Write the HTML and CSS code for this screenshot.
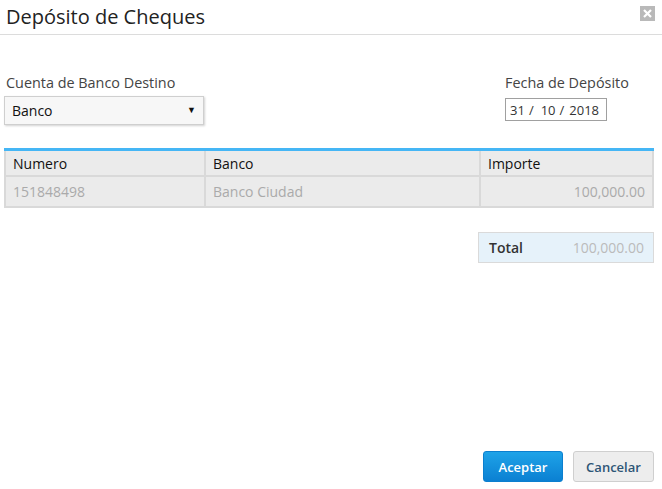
FILE: index.html
```html
<!DOCTYPE html>
<html lang="es">
<head>
<meta charset="utf-8">
<title>Depósito de Cheques</title>
<link rel="stylesheet" href="styles.css">
</head>
<body>
<div class="dialog">
  <header class="dlg-head">
    <h1 class="dlg-title">Depósito de Cheques</h1>
    <button class="dlg-close" type="button" aria-label="Cerrar">
      <svg width="9" height="9" viewBox="0 0 9 9"><path d="M1 1L8 8M8 1L1 8" stroke="#fff" stroke-width="2.2"/></svg>
    </button>
  </header>

  <section class="dlg-body">
    <div class="form-row">
      <div class="field">
        <label class="field-label">Cuenta de Banco Destino</label>
        <div class="select">
          <span>Banco</span>
          <span class="caret">▼</span>
        </div>
      </div>
      <div class="field field-date">
        <label class="field-label">Fecha de Depósito</label>
        <div class="date-input">
          <span class="dd">31</span><span class="sep">/</span>
          <span class="mm">10</span><span class="sep">/</span>
          <span class="yy">2018</span>
        </div>
      </div>
    </div>

    <table class="grid">
      <thead>
        <tr><th class="c-num">Numero</th><th class="c-bank">Banco</th><th class="c-amt">Importe</th></tr>
      </thead>
      <tbody>
        <tr><td>151848498</td><td>Banco Ciudad</td><td class="num">100,000.00</td></tr>
      </tbody>
    </table>

    <div class="total-row">
      <div class="total">
        <span class="total-label">Total</span>
        <span class="total-value">100,000.00</span>
      </div>
    </div>
  </section>

  <footer class="dlg-foot">
    <button class="btn btn-primary" type="button">Aceptar</button>
    <button class="btn btn-default" type="button">Cancelar</button>
  </footer>
</div>
</body>
</html>
```

FILE: styles.css
```css
* { box-sizing: border-box; }

html, body {
  margin: 0;
  padding: 0;
  background: #fff;
}

body {
  font-family: "Open Sans", "Noto Sans", sans-serif;
  color: #333;
  width: 662px;
  height: 489px;
  overflow: hidden;
}

.dialog {
  display: flex;
  flex-direction: column;
  height: 489px;
}

/* header */
.dlg-head {
  display: flex;
  align-items: flex-start;
  justify-content: space-between;
  height: 35px;
  border-bottom: 1px solid #dcdcdc;
  padding: 0 7px 0 6px;
}

.dlg-title {
  margin: 0;
  font-size: 20px;
  font-weight: 400;
  line-height: 33px;
  color: #222;
}

.dlg-close {
  margin-top: 6px;
  width: 15px;
  height: 15px;
  padding: 0;
  border: 0;
  background: #b9b9b9;
  display: flex;
  align-items: center;
  justify-content: center;
}

/* body */
.dlg-body {
  flex: 1;
  padding: 38px 8px 0 4px;
}

.form-row {
  display: flex;
  justify-content: space-between;
  align-items: flex-start;
}

.field-label {
  display: block;
  font-size: 14.4px;
  line-height: 20px;
  color: #444;
  margin-left: 2px;
}

.select {
  margin-top: 3px;
  width: 200px;
  height: 29px;
  border: 1px solid #cfcfcf;
  background: #f7f7f7;
  box-shadow: 1px 1px 2px rgba(0,0,0,0.18);
  display: flex;
  align-items: center;
  justify-content: space-between;
  padding: 0 7px 0 7px;
  font-size: 14px;
  color: #111;
}

.caret {
  font-size: 9px;
  color: #111;
  position: relative;
  top: -1px;
}

.field-date {
  width: 150px;
}

.field-date .field-label {
  margin-left: 1px;
}

.date-input {
  margin-top: 5px;
  margin-left: 1px;
  width: 102px;
  height: 23px;
  border: 1px solid #a0a0a0;
  display: flex;
  align-items: center;
  padding-left: 4px;
  font-size: 13px;
  color: #333;
}

.date-input .sep { margin: 0 4px 0 4px; }
.date-input .mm { margin-left: 3px; }
.date-input .yy { margin-left: 1px; }

/* table */
.grid {
  margin-top: 23px;
  width: 650px;
  border-collapse: collapse;
  border-top: 3px solid #45b6f5;
  background: #ebebeb;
  font-size: 14px;
}

.grid th, .grid td {
  border: 2px solid #d9d9d9;
  padding: 0 7px;
  text-align: left;
}

.grid tr:first-child th { border-top: 0; }

.grid thead tr { height: 26px; }
.grid tbody tr { height: 31px; }

.grid th {
  font-weight: 400;
  color: #111;
  padding-top: 1px;
}

.grid td {
  color: #aaa;
  padding-top: 1px;
}

.grid td.num { text-align: right; padding-right: 7px; }

.c-num { width: 200px; }
.c-bank { width: 275px; }

/* total */
.total-row {
  display: flex;
  justify-content: flex-end;
  margin-top: 24px;
}

.total {
  width: 176px;
  height: 31px;
  background: #e6f2fa;
  border: 1px solid #dadada;
  display: flex;
  align-items: center;
  justify-content: space-between;
  padding: 0 9px 0 10px;
  font-size: 14px;
}

.total-label {
  font-weight: 600;
  color: #333;
}

.total-value {
  color: #bbb;
}

/* footer */
.dlg-foot {
  display: flex;
  justify-content: flex-end;
  gap: 10px;
  padding: 0 8px 7px 0;
}

.btn {
  height: 31px;
  border-radius: 3px;
  font-family: inherit;
  font-size: 13px;
  font-weight: 600;
  padding: 0;
}

.btn-primary {
  width: 80px;
  color: #fff;
  border: 1px solid #0b7fcf;
  background: linear-gradient(#1ea3e8, #0b80d2);
}

.btn-default {
  width: 81px;
  color: #2d5576;
  border: 1px solid #cfcfcf;
  background: #ededed;
}
```
